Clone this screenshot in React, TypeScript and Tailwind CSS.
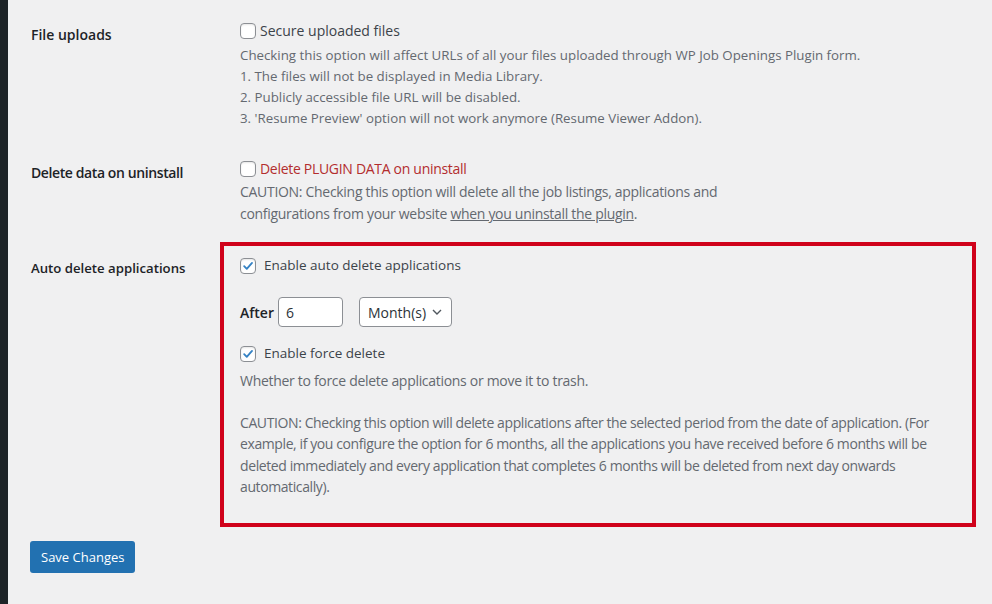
import React from 'react';

const font = { fontFamily: '"Open Sans", "Noto Sans", sans-serif' };

const Checkbox = ({ checked }: { checked?: boolean }) => (
  <span className="inline-flex h-4 w-4 shrink-0 items-center justify-center rounded-[4px] border border-[#8c8f94] bg-white shadow-[inset_0_1px_2px_rgba(0,0,0,0.1)]">
    {checked && (
      <svg viewBox="0 0 16 16" className="h-4 w-4">
        <path d="M3.6 8.2 L6.6 11.2 L12.6 4.4" fill="none" stroke="#3582c4" strokeWidth="2.1" strokeLinecap="round" strokeLinejoin="round" />
      </svg>
    )}
  </span>
);

export default function App() {
  return (
    <div className="flex h-[604px] w-[992px] overflow-hidden bg-[#f0f0f1] text-[14px] leading-[21px] text-[#3c434a]" style={font}>
      <div className="w-2 shrink-0 bg-[#1d2327]" />
      <div className="flex-1 pl-[23px]">
        {/* File uploads */}
        <div className="grid grid-cols-[189px_1fr] pt-5">
          <div className="pt-1 font-semibold text-[#1d2327]">File uploads</div>
          <div className="pl-5">
            <label className="flex items-center gap-[4px]">
              <Checkbox />
              <span>Secure uploaded files</span>
            </label>
            <p className="mt-1 text-[13.3px] text-[#646970]">
              Checking this option will affect URLs of all your files uploaded through WP Job Openings Plugin form.
              <br />1. The files will not be displayed in Media Library.
              <br />2. Publicly accessible file URL will be disabled.
              <br />3. 'Resume Preview' option will not work anymore (Resume Viewer Addon).
            </p>
          </div>
        </div>

        {/* Delete data */}
        <div className="grid grid-cols-[189px_1fr] pt-[29px]">
          <div className="pt-1 font-semibold text-[#1d2327] tracking-[-0.4px]">Delete data on uninstall</div>
          <div className="pl-5 tracking-[-0.3px]">
            <label className="flex items-center gap-[4px]">
              <Checkbox />
              <span className="text-[#b32d2e]">Delete PLUGIN DATA on uninstall</span>
            </label>
            <p className="mt-[2px] leading-[22px] text-[#646970]">
              CAUTION: Checking this option will delete all the job listings, applications and
              <br />configurations from your website <span className="underline">when you uninstall the plugin</span>.
            </p>
          </div>
        </div>

        {/* Auto delete */}
        <div className="grid grid-cols-[189px_1fr] pt-[17px]">
          <div className="pt-[16px] text-[13.2px] font-semibold text-[#1d2327]">Auto delete applications</div>
          <div className="mr-[16px] border-4 border-[#d0021b] pb-[26px] pl-4 pt-[9px]">
            <label className="flex items-center gap-[8px]">
              <Checkbox checked />
              <span className="text-[13.5px]">Enable auto delete applications</span>
            </label>
            <div className="mt-[21px] flex items-center">
              <span className="mr-[4px] font-semibold text-[#1d2327]">After</span>
              <div className="flex h-[30px] w-[65px] items-center rounded-[4px] border border-[#8c8f94] bg-white px-[7px] text-[#2c3338]">6</div>
              <div className="ml-4 flex h-[30px] w-[93px] items-center justify-between rounded-[4px] border border-[#8c8f94] bg-white pl-2 pr-[8px] text-[#2c3338]">
                <span>Month(s)</span>
                <svg viewBox="0 0 12 12" className="h-3 w-3">
                  <path d="M2 4 L6 8 L10 4" fill="none" stroke="#50575e" strokeWidth="1.4" />
                </svg>
              </div>
            </div>
            <label className="mt-[16px] flex items-center gap-[8px]">
              <Checkbox checked />
              <span className="text-[13.5px]">Enable force delete</span>
            </label>
            <p className="mt-[6px] tracking-[-0.3px] text-[#646970]">Whether to force delete applications or move it to trash.</p>
            <p className="mt-[21px] leading-[21.3px] tracking-[-0.4px] text-[#646970]">
              CAUTION: Checking this option will delete applications after the selected period from the date of application. (For
              <br />example, if you configure the option for 6 months, all the applications you have received before 6 months will be
              <br />deleted immediately and every application that completes 6 months will be deleted from next day onwards
              <br />automatically).
            </p>
          </div>
        </div>

        <button className="mt-[14px] h-8 -ml-px rounded-[3px] bg-[#2271b1] px-[11px] text-[13px] text-white">Save Changes</button>
      </div>
    </div>
  );
}
